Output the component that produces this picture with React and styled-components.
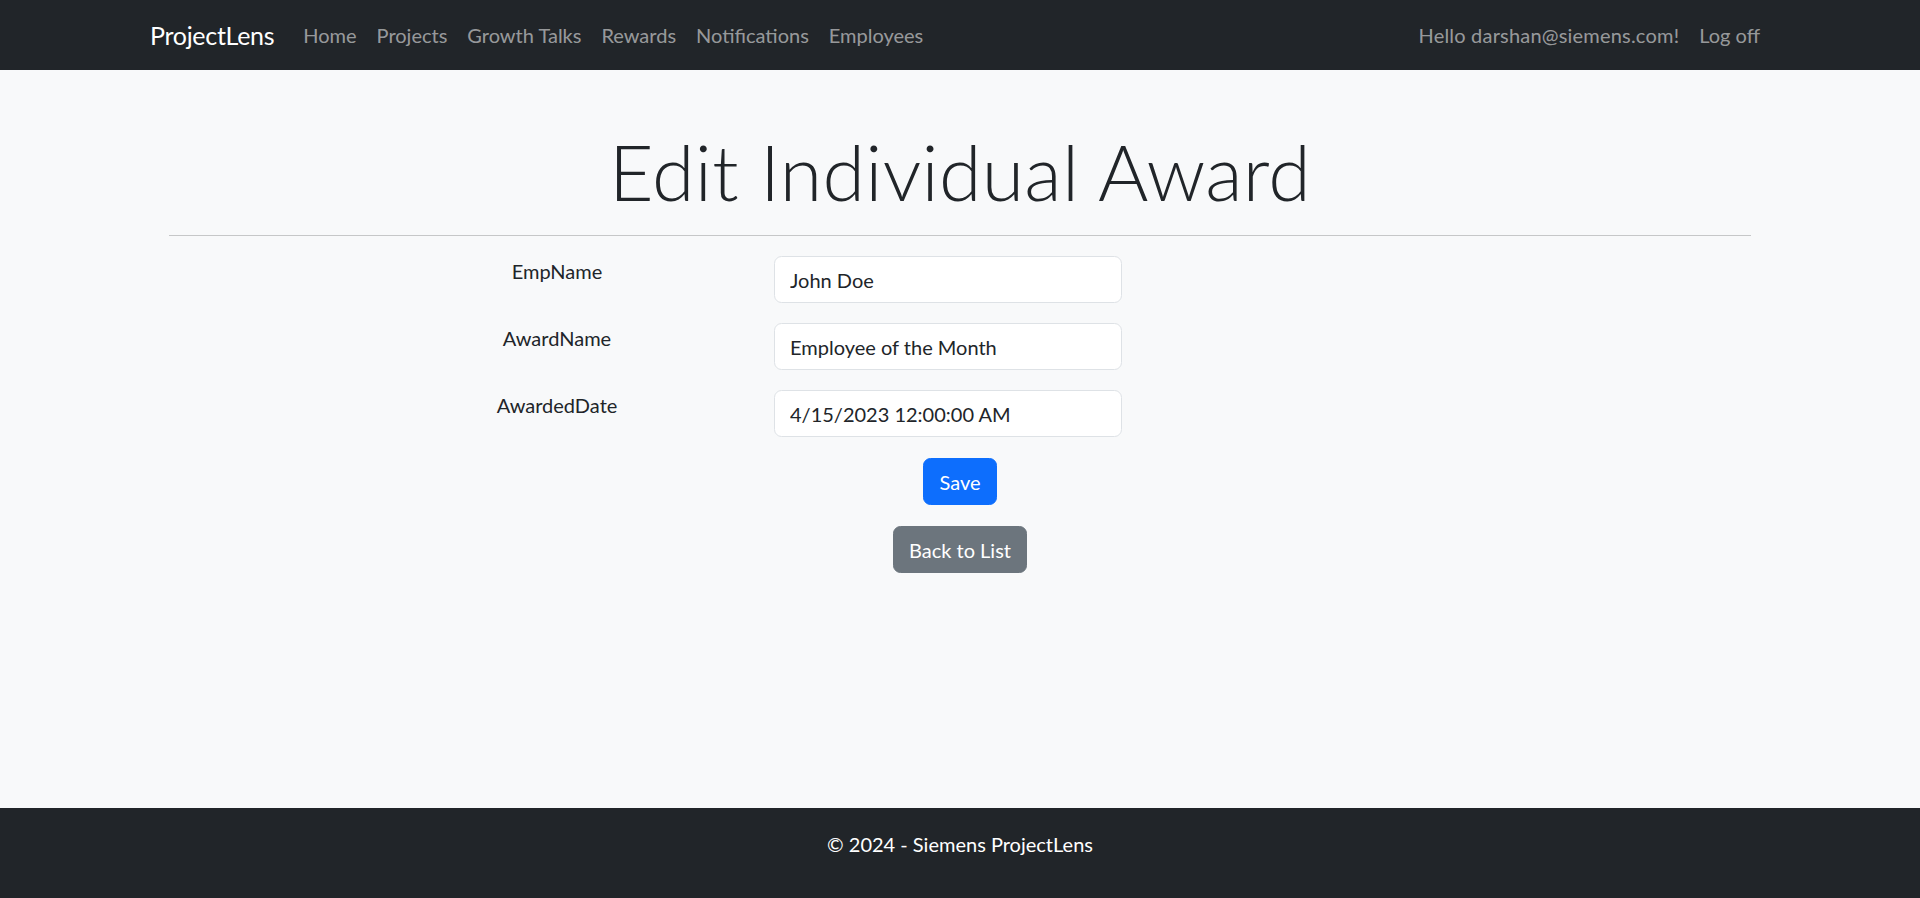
import React from 'react';
import styled, { createGlobalStyle } from 'styled-components';

const GlobalStyle = createGlobalStyle`
  * { box-sizing: border-box; }
  body {
    margin: 0;
    font-family: Lato, "Liberation Sans", sans-serif;
    font-size: 20px;
    line-height: 1.5;
    color: #212529;
    background: #f8f9fa;
  }
`;

const navItems = ['Home', 'Projects', 'Growth Talks', 'Rewards', 'Notifications', 'Employees'];

const fields = [
  { label: 'EmpName', value: 'John Doe' },
  { label: 'AwardName', value: 'Employee of the Month' },
  { label: 'AwardedDate', value: '4/15/2023 12:00:00 AM' },
];

export default function App() {
  return (
    <Page>
      <GlobalStyle />
      <Navbar>
        <NavContainer>
          <Brand href="#">ProjectLens</Brand>
          <NavList>
            {navItems.map((item) => (
              <NavLink key={item} href="#">{item}</NavLink>
            ))}
          </NavList>
          <NavList>
            <NavLink href="#" $wide>Hello darshan@siemens.com!</NavLink>
            <NavLink href="#">Log off</NavLink>
          </NavList>
        </NavContainer>
      </Navbar>

      <Main>
        <Title>Edit Individual Award</Title>
        <Divider />
        <FormGrid>
          {fields.map((f) => (
            <React.Fragment key={f.label}>
              <Label>{f.label}</Label>
              <Input defaultValue={f.value} />
            </React.Fragment>
          ))}
        </FormGrid>
        <Actions>
          <Button $variant="primary">Save</Button>
          <Button $variant="secondary">Back to List</Button>
        </Actions>
      </Main>

      <Footer>© 2024 - Siemens ProjectLens</Footer>
    </Page>
  );
}

const Page = styled.div`
  display: flex;
  flex-direction: column;
  height: 100vh;
`;

const Navbar = styled.nav`
  background: #212529;
  height: 70px;
  flex-shrink: 0;
`;

const NavContainer = styled.div`
  width: 1650px;
  margin: 0 auto;
  padding: 0 15px;
  height: 100%;
  display: flex;
  align-items: center;
`;

const Brand = styled.a`
  color: #fff;
  font-size: 25px;
  letter-spacing: -0.3px;
  text-decoration: none;
  margin-right: 19px;
  padding-top: 1px;
`;

const NavList = styled.div`
  display: flex;
  align-items: center;

  &:last-child {
    margin-left: auto;
  }
`;

const NavLink = styled.a`
  color: rgba(255, 255, 255, 0.55);
  text-decoration: none;
  padding: 10px;
  letter-spacing: ${(p) => (p.$wide ? '0.2px' : '0')};
`;

const Main = styled.main`
  flex: 1;
  width: 1650px;
  margin: 0 auto;
  padding: 55px 15px 0;
`;

const Title = styled.h1`
  margin: 0;
  text-align: center;
  font-size: 77px;
  font-weight: 300;
  line-height: 1.2;
  letter-spacing: 0.3px;
`;

const Divider = styled.hr`
  margin: 18px 19px 20px;
  border: 0;
  border-top: 1px solid #c6c7c8;
`;

const FormGrid = styled.div`
  display: grid;
  grid-template-columns: 234px 348px;
  column-gap: 100px;
  row-gap: 20px;
  margin-left: 290px;
`;

const Label = styled.label`
  text-align: center;
  line-height: 30px;
`;

const Input = styled.input`
  width: 100%;
  height: 47px;
  padding: 7.5px 15px;
  font-family: inherit;
  font-size: 20px;
  color: #212529;
  background: #fff;
  border: 1px solid #dee2e6;
  border-radius: 7.5px;
  outline: none;
`;

const Actions = styled.div`
  display: flex;
  flex-direction: column;
  align-items: center;
  gap: 21px;
  margin-top: 21px;
`;

const Button = styled.button`
  font-family: inherit;
  font-size: 20px;
  line-height: 30px;
  padding: 7.5px 15px;
  border: 1px solid ${(p) => (p.$variant === 'primary' ? '#0d6efd' : '#6c757d')};
  border-radius: 7.5px;
  color: #fff;
  background: ${(p) => (p.$variant === 'primary' ? '#0d6efd' : '#6c757d')};
  cursor: pointer;
`;

const Footer = styled.footer`
  flex-shrink: 0;
  height: 90px;
  background: #212529;
  color: #fff;
  text-align: center;
  padding-top: 21px;
`;
